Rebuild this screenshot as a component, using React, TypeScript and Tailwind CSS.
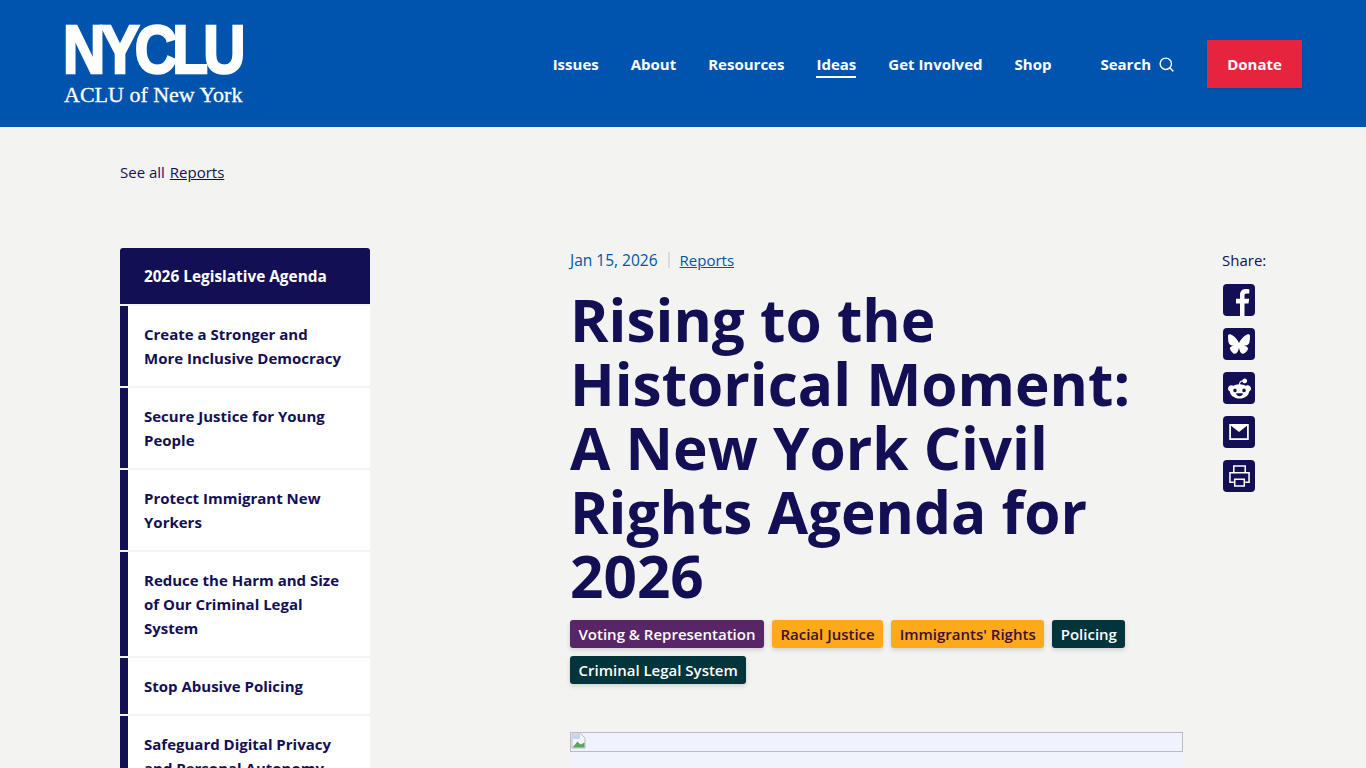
import { Search } from 'lucide-react'
import { FaBluesky, FaRedditAlien } from 'react-icons/fa6'

const navItems = ['Issues', 'About', 'Resources', 'Ideas', 'Get Involved', 'Shop']

const sideItems = [
  ['Create a Stronger and', 'More Inclusive Democracy'],
  ['Secure Justice for Young', 'People'],
  ['Protect Immigrant New', 'Yorkers'],
  ['Reduce the Harm and Size', 'of Our Criminal Legal', 'System'],
  ['Stop Abusive Policing'],
  ['Safeguard Digital Privacy', 'and Personal Autonomy'],
]

const tags = [
  { label: 'Voting & Representation', cls: 'bg-[#582566] text-white' },
  { label: 'Racial Justice', cls: 'bg-[#fca91a] text-[#3d1030]' },
  { label: "Immigrants' Rights", cls: 'bg-[#fca91a] text-[#3d1030]' },
  { label: 'Policing', cls: 'bg-[#02343b] text-white' },
  { label: 'Criminal Legal System', cls: 'bg-[#02343b] text-white' },
]

function ShareTile({ children }: { children: React.ReactNode }) {
  return (
    <a className="flex h-8 w-8 items-center justify-center overflow-hidden rounded-[4px] bg-[#130f54] text-white">
      {children}
    </a>
  )
}

function Logo() {
  return (
    <a className="flex w-[180px] flex-col pt-[6px]">
      <span className="-ml-[1px] h-[52px] origin-top-left scale-x-[0.86] font-['Liberation_Sans'] text-[68px] leading-[52px] font-bold tracking-[-5.5px] whitespace-nowrap text-white [-webkit-text-stroke:2.5px_white]">
        NYCLU
      </span>
      <span className="mt-[5px] font-['Liberation_Serif'] text-[22px] leading-[30px] whitespace-nowrap text-white [-webkit-text-stroke:0.3px_white]">
        ACLU of New York
      </span>
    </a>
  )
}

export default function App() {
  return (
    <div className="h-screen overflow-hidden bg-[#f3f3f1] font-['Open_Sans',sans-serif] text-[#130f54]">
      <header className="flex h-[127px] items-center justify-between bg-[#0054ad] px-[64px]">
        <Logo />
        <nav className="flex items-center">
          <ul className="flex items-center gap-[32px] text-[15px] font-bold text-white">
            {navItems.map((item) => (
              <li key={item}>
                <a className={item === 'Ideas' ? 'block border-b-2 border-white pt-[2px] leading-[24px]' : 'block border-b-2 border-transparent pt-[2px] leading-[24px]'}>
                  {item}
                </a>
              </li>
            ))}
          </ul>
          <a className="ml-[49px] flex items-center gap-[7px] pt-[2px] text-[15px] font-bold text-white">
            Search
            <Search size={17} strokeWidth={2} />
          </a>
          <a className="ml-[32px] flex h-[48px] w-[95px] items-center justify-center bg-[#e7243e] pt-[2px] text-[15px] font-bold text-white shadow-sm">
            Donate
          </a>
        </nav>
      </header>

      <main className="px-[120px]">
        <p className="pt-[33px] text-[15px] leading-[24px]">
          See all <a className="ml-[1px] underline">Reports</a>
        </p>

        <div className="mt-[64px] flex items-start">
          <aside className="w-[250px] shrink-0">
            <div className="flex h-[56px] items-center rounded-t-[3px] bg-[#130f54] pt-[1px] pl-[24px] text-[15.4px] font-bold text-white">
              2026 Legislative Agenda
            </div>
            <ul className="mt-[2px] flex flex-col gap-[2px]">
              {sideItems.map((lines) => (
                <li key={lines[0]} className="border-l-[8px] border-[#130f54] bg-white py-[16px] pl-[16px] text-[15px] leading-[24px] font-bold">
                  {lines.map((line) => (
                    <span key={line} className="block whitespace-nowrap">
                      {line}
                    </span>
                  ))}
                </li>
              ))}
            </ul>
          </aside>

          <article className="ml-[200px] w-[613px] shrink-0">
            <div className="flex items-center text-[15.5px] leading-[24px] text-[#0054ad]">
              <span>Jan 15, 2026</span>
              <span className="mx-[10px] h-[16px] w-[2px] bg-[#dcdcdc]" />
              <a className="text-[15px] underline">Reports</a>
            </div>
            <h1 className="mt-[15px] pr-[40px] text-[58.5px] leading-[64px] font-bold">
              Rising to the Historical Moment: A New York Civil Rights Agenda for 2026
            </h1>
            <div className="mt-[13px] flex flex-wrap gap-x-[8px] gap-y-[8px]">
              {tags.map((tag) => (
                <span key={tag.label} className={`h-[28px] rounded-[3px] px-[8.5px] text-[15px] leading-[28px] font-semibold whitespace-nowrap shadow-[0_2px_5px_rgba(0,0,0,0.15)] ${tag.cls}`}>
                  {tag.label}
                </span>
              ))}
            </div>
            <div className="mt-[48px] h-[60px] bg-[#f0f3fb]">
              <div className="h-[20px] border border-[#b9bcc6]">
                <svg width="16" height="16" viewBox="0 0 16 16">
                  <path d="M1 1h9l4 4v10H1z" fill="#f4f6fb" stroke="#b8bcc4" />
                  <path d="M1.500 14.500l5-6 3 3 4-2v5z" fill="#5aa75a" />
                  <path d="M2 2h7v4H2z" fill="#c4d4f0" />
                </svg>
              </div>
            </div>
          </article>

          <aside className="ml-[39px] flex flex-col">
            <span className="text-[15px] leading-[24px]">Share:</span>
            <div className="mt-[12px] ml-[1px] flex flex-col gap-[12px]">
              <ShareTile>
                <svg width="32" height="32" viewBox="0 0 32 32" fill="white">
                  <path d="M21.500 32V19.600h4l.7-4.800h-4.700v-3c0-1.400.5-2.300 2.400-2.300h2.400V5.300c-.5-.1-1.900-.2-3.500-.2-3.500 0-5.800 2.100-5.800 6v3.700h-4v4.800h4V32z" />
                </svg>
              </ShareTile>
              <ShareTile>
                <FaBluesky size={22} />
              </ShareTile>
              <ShareTile>
                <FaRedditAlien size={23} />
              </ShareTile>
              <ShareTile>
                <svg width="20" height="16" viewBox="0 0 22 18">
                  <rect x="1" y="1" width="20" height="16" fill="none" stroke="white" strokeWidth="2" />
                  <path d="M1 1h20L11 9z" fill="white" />
                </svg>
              </ShareTile>
              <ShareTile>
                <svg width="21" height="22" viewBox="0 0 22 23" fill="none" stroke="white" strokeWidth="1.6">
                  <path d="M5 8V1h12v7" />
                  <path d="M5 18H1V8h20v10h-4" />
                  <path d="M6 15h10v7H6z" />
                </svg>
              </ShareTile>
            </div>
          </aside>
        </div>
      </main>
    </div>
  )
}
